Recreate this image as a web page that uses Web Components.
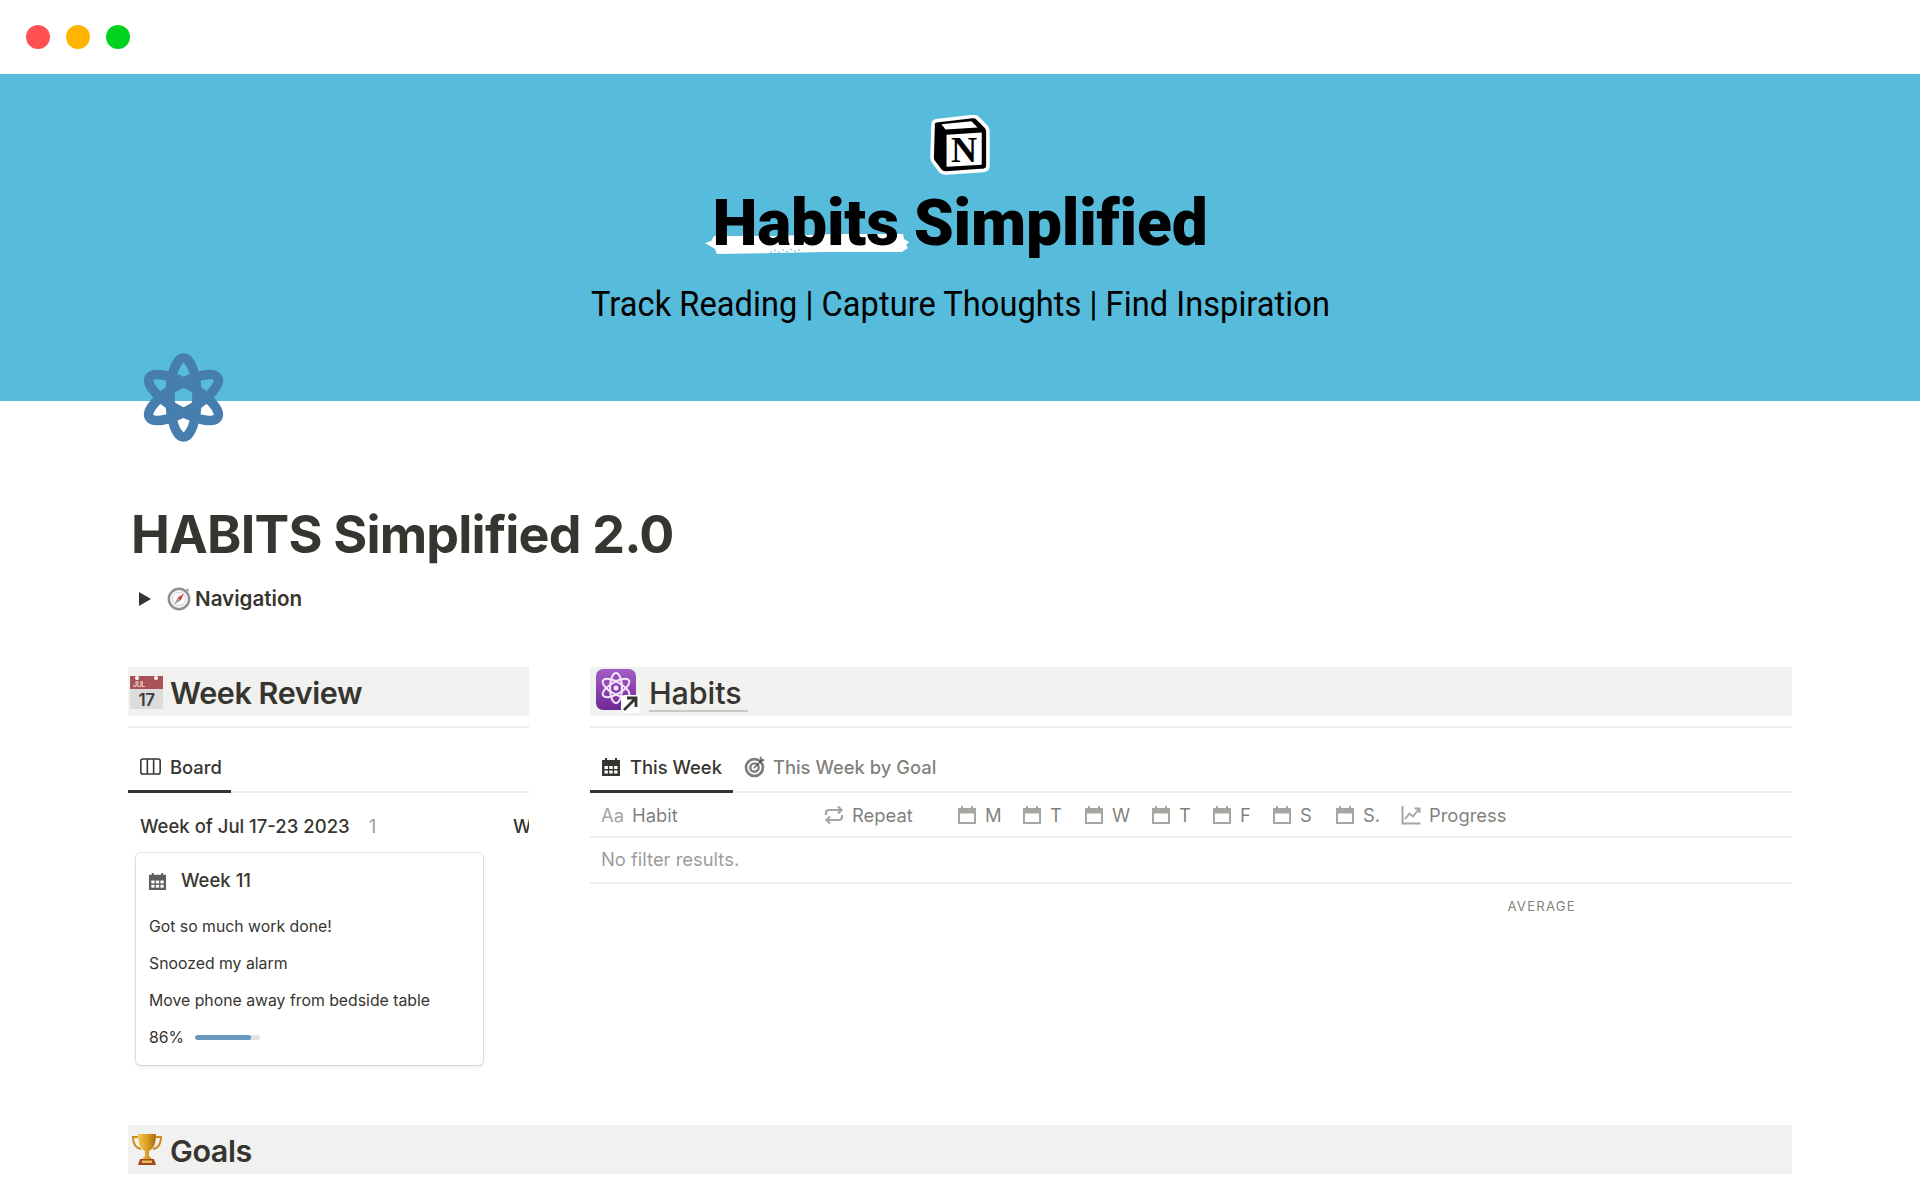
<!DOCTYPE html>
<html lang="en"><head><meta charset="utf-8"><title>Habits Simplified</title>
<style>
html,body{margin:0;padding:0;background:#fff;height:1200px;overflow:hidden}
body{font-family:Inter,"Liberation Sans",sans-serif;color:#37352f}
</style></head><body>
<x-page></x-page>
<script>
const ICONS={
cal:`<svg viewBox="0 0 20 20" width="100%" height="100%"><path fill="currentColor" d="M4 1h2v2h8V1h2v2h3v16H1V3h3z"/><g fill="#fff"><rect x="3.5" y="9" width="3.4" height="3"/><rect x="8.3" y="9" width="3.4" height="3"/><rect x="13.1" y="9" width="3.4" height="3"/><rect x="3.5" y="13.5" width="3.4" height="3"/><rect x="8.3" y="13.5" width="3.4" height="3"/><rect x="13.1" y="13.5" width="3.4" height="3"/></g></svg>`,
calo:`<svg viewBox="0 0 20 20" width="100%" height="100%"><path fill="currentColor" d="M4 1h2v2h8V1h2v2h3v16H1V3h3zM3 8.500V17h14V8.500z"/></svg>`,
board:`<svg viewBox="0 0 20 16" width="100%" height="100%" fill="none" stroke="currentColor" stroke-width="1.5"><rect x=".8" y=".8" width="18.4" height="14.4" rx="2"/><path d="M7 1v14M13 1v14"/></svg>`,
target:`<svg viewBox="0 0 20 20" width="100%" height="100%" fill="none" stroke="currentColor"><circle cx="9.500" cy="10.500" r="7.700" stroke-width="2.400"/><circle cx="9.500" cy="10.500" r="3.800" stroke-width="2.200"/><circle cx="9.500" cy="10.500" r="1" fill="currentColor" stroke="none"/><path d="M10 10l7-7" stroke-width="1.600"/><path d="M15 .5l.5 3 3 .5" stroke-width="1.600"/></svg>`,
repeat:`<svg viewBox="0 0 20 20" width="100%" height="100%" fill="none" stroke="currentColor" stroke-width="2.200"><path d="M2 10V8a3 3 0 0 1 3-3h12M14 1.500 17.500 5 14 8.500"/><path d="M18 10v2a3 3 0 0 1-3 3H3M6 11.500 2.500 15 6 18.500"/></svg>`,
chart:`<svg viewBox="0 0 20 20" width="100%" height="100%" fill="none" stroke="currentColor" stroke-width="1.900"><path d="M1.500 1v17.500H19.500"/><path d="M4 14l4.500-5.500 3.500 3L18 4"/><path d="M13.500 3.500H18.500V8"/></svg>`
};
function def(name,html,init){
 customElements.define(name,class extends HTMLElement{
  constructor(){super();this.attachShadow({mode:'open'}).innerHTML=html}
  connectedCallback(){init&&init(this)}
 });
}
def('x-icon',`<style>:host{display:inline-block;flex:none;line-height:0}</style><span id="i" style="display:block;width:100%;height:100%"></span>`,el=>{el.shadowRoot.getElementById('i').innerHTML=ICONS[el.getAttribute('name')]||''});

def('x-window-bar',`<style>
:host{display:flex;height:74px;align-items:center;gap:16px;padding-left:26px;background:#fff;box-sizing:border-box}
i{width:24px;height:24px;border-radius:50%;display:block}
</style><i style="background:#ff5152"></i><i style="background:#ffb500"></i><i style="background:#00d21f"></i>`);

def('x-brand-logo',`<style>:host{display:block;width:60px;height:60px}svg{display:block}</style>
<svg viewBox="1 1 58 58" width="60" height="60">
<path d="M4 10Q4 7 7 6.500L42 2.500Q45 2 47 4L55 12Q57 14 57 17V50Q57 54 53 54.500L17 57Q13 57.500 11 55L5 47Q3 45 3 42Z" fill="#000" stroke="#fff" stroke-width="3.500" stroke-linejoin="round"/>
<path d="M12 10 41 7 47 13 16 15Z" fill="#fff"/>
<path d="M17 20 51 18V49L17 51Z" fill="#fff"/>
<text x="34" y="46" text-anchor="middle" font-family="'Liberation Serif',serif" font-weight="700" font-size="35" fill="#000">N</text>
</svg>`);

def('x-cover',`<style>
:host{display:flex;flex-direction:column;align-items:center;height:327px;background:#57bbdb;box-sizing:border-box;padding-top:41px;color:#000}
h1{margin:14px 0 0;font:900 64px/70px Roboto,sans-serif;letter-spacing:-.2px;display:flex;gap:15px;white-space:nowrap}
.w{position:relative;z-index:0}
.w svg{position:absolute;left:-8px;bottom:5px;width:204px;height:21px;z-index:-1}
p{margin:23px 0 0;font:400 35.500px/44px Roboto,sans-serif;white-space:nowrap;letter-spacing:.05px;transform:scaleX(.918)}
</style>
<x-brand-logo></x-brand-logo>
<h1><span class="w"><svg viewBox="0 0 204 21" preserveAspectRatio="none"><path fill="#fff" d="M0 10 6 8 9 3 70 3 130 1 198 1 199 6 204 9 201 12 203 15 197 19 120 19 70 20 12 21 10 16 5 13Z"/><g fill="#8fd0e6"><circle cx="66" cy="19" r="1"/><circle cx="70" cy="17.500" r="1"/><circle cx="74" cy="19" r="1"/><circle cx="78" cy="17" r="1"/><circle cx="82" cy="18.500" r="1"/><circle cx="86" cy="16.500" r="1"/><circle cx="90" cy="18" r="1"/><circle cx="94" cy="17" r="1"/></g></svg>Habits</span><span>Simplified</span></h1>
<p>Track Reading | Capture Thoughts | Find Inspiration</p>`);

def('x-atom',`<style>:host{position:absolute;display:block;width:81px;height:89px}</style>
<svg viewBox="0 0 81 89" width="81" height="89" fill="none" stroke="#467fad" stroke-width="9.500">
<ellipse cx="40.500" cy="44.500" rx="13.500" ry="39.500"/>
<ellipse cx="40.500" cy="44.500" rx="13.500" ry="39.500" transform="rotate(60 40.500 44.500)"/>
<ellipse cx="40.500" cy="44.500" rx="13.500" ry="39.500" transform="rotate(-60 40.500 44.500)"/>
</svg>`);

def('x-toggle',`<style>
:host{display:flex;align-items:center;height:32px;font:600 20.600px/32px Inter,sans-serif;color:#37352f}
.t{width:0;height:0;border-left:12px solid #37352f;border-top:7px solid transparent;border-bottom:7px solid transparent;margin-left:11px;margin-right:16px}
svg{margin-right:4px;flex:none}
</style><span class="t"></span>
<svg viewBox="0 0 24 24" width="24" height="24"><circle cx="12" cy="12" r="10.200" fill="#f4f4f6" stroke="#8f8f96" stroke-width="2.400"/><circle cx="12" cy="12" r="6.500" fill="#fff" stroke="#d5d5da"/><path d="M17 6.500 13.500 13.500 10.500 11Z" fill="#e0322c"/><path d="M7 17.500 13.500 13.500 10.500 11Z" fill="#9a9aa0"/><circle cx="20.500" cy="3" r="1.500" fill="#aaa"/></svg>
<slot></slot>`);

def('x-heading',`<style>
:host{display:flex;align-items:center;height:49px;background:#f1f1ef;font:600 30.500px/49px Inter,sans-serif;color:#37352f;letter-spacing:-.42px;white-space:nowrap}
.ic{display:flex;width:42px;justify-content:flex-start;flex:none}
.tx{padding-top:2px;display:flex;align-items:center}
</style><span class="ic"><slot name="icon"></slot></span><span class="tx"><slot></slot></span>`);

def('x-cal-emoji',`<style>:host{display:block;margin-left:2px;line-height:0}</style>
<svg viewBox="0 0 33 34" width="33" height="34"><rect y="1" width="33" height="33" fill="#dcdcdc"/><rect y="1" width="33" height="13" fill="#a85358"/>
<circle cx="7" cy="3" r="2" fill="#fff"/><circle cx="26" cy="3" r="2" fill="#fff"/>
<text x="3" y="12" font-family="Inter,sans-serif" font-size="7" fill="#f0d6d6">JUL</text>
<text x="16.500" y="31" text-anchor="middle" font-family="Inter,sans-serif" font-size="17" fill="#3c3c3c">17</text></svg>`);

def('x-trophy',`<style>:host{display:block;margin-left:3px;line-height:0}</style>
<svg viewBox="0 0 32 33" width="32" height="33"><defs><linearGradient id="g" x1="0" x2="1"><stop offset="0" stop-color="#f6c64c"/><stop offset=".55" stop-color="#d99a20"/><stop offset="1" stop-color="#a86a12"/></linearGradient></defs>
<path d="M7 4H2c0 7 3 11 8 12M25 4h5c0 7-3 11-8 12" fill="none" stroke="#c98d1e" stroke-width="2"/>
<path d="M7 1h18c0 9-2 15-7 17v5l3 3H11l3-3v-5C9 16 7 10 7 1Z" fill="url(#g)"/>
<path d="M9 26h14l2 6H7Z" fill="#a5481f"/><rect x="11" y="27.500" width="10" height="2.500" fill="#e6b860"/></svg>`);

def('x-atom-tile',`<style>:host{display:block;margin-left:4px;margin-top:-3px;line-height:0}</style>
<svg viewBox="0 0 46 46" width="46" height="46">
<defs><linearGradient id="p" x2="0" y2="1"><stop offset="0" stop-color="#a45cc8"/><stop offset="1" stop-color="#6f2a97"/></linearGradient></defs>
<rect x="2" y="2" width="40" height="41" rx="7" fill="url(#p)"/>
<g fill="none" stroke="#f4e6fa" stroke-width="2"><ellipse cx="22" cy="21" rx="6" ry="15"/><ellipse cx="22" cy="21" rx="6" ry="15" transform="rotate(60 22 21)"/><ellipse cx="22" cy="21" rx="6" ry="15" transform="rotate(-60 22 21)"/></g><circle cx="22" cy="21" r="2.500" fill="#f4e6fa"/>
<rect x="27" y="28" width="19" height="18" rx="4" fill="#fff"/>
<path d="M30 43 42 31M33 31h9v9" fill="none" stroke="#37352f" stroke-width="2.800"/></svg>`);

def('x-tabs',`<style>
:host{display:flex;height:65px;align-items:flex-end;box-sizing:border-box;border-bottom:2px solid #ececeb;font:500 18.400px/24px Inter,sans-serif;white-space:nowrap}
</style><slot></slot>`);

def('x-tab',`<style>
:host{display:flex;align-items:center;height:53px;margin-bottom:-2px;box-sizing:border-box;gap:9px;padding-top:3px;border-bottom:3px solid transparent;color:rgba(55,53,47,.65)}
:host([active]){border-bottom-color:#37352f;color:#37352f}
</style><slot></slot>`);

def('x-card',`<style>
:host{display:block;width:347px;height:212px;box-sizing:border-box;border-radius:5px;background:#fff;box-shadow:0 0 0 1px rgba(15,15,15,.1),0 2px 4px rgba(15,15,15,.1);padding:0 13px;margin-left:8px;font:400 15.800px/20px Inter,sans-serif}
.t{display:flex;align-items:center;height:54.500px;font:500 18.500px/24px Inter,sans-serif;gap:14px}
.l{height:37.300px;line-height:37px;white-space:nowrap}
.p{display:flex;align-items:center;height:37px;gap:11px}
.b{width:65px;height:5px;border-radius:3px;background:#e3e2e0;overflow:hidden;margin-top:-1px}
.b i{display:block;height:100%;width:86%;background:#6698c0;border-radius:3px}
x-icon{width:19px;height:19px;color:#5f5e5b;margin:2px 0 0 -1px}
</style>
<div class="t"><x-icon name="cal"></x-icon><span>Week 11</span></div>
<div class="l">Got so much work done!</div><div class="l">Snoozed my alarm</div><div class="l">Move phone away from bedside table</div>
<div class="p"><span>86%</span><span class="b"><i></i></span></div>`);

def('x-board',`<style>
:host{display:flex;overflow:hidden;width:401px;white-space:nowrap;padding-bottom:8px}
.lane{flex:none;width:373px}
.h{height:60px;display:flex;align-items:center;padding:5px 0 0 12px;font:500 18.500px/24px Inter,sans-serif;box-sizing:border-box}
.h b{font-weight:400;color:rgba(55,53,47,.5);margin-left:19px}
</style>
<div class="lane"><div class="h">Week of Jul 17-23 2023<b>1</b></div><x-card></x-card></div>
<div class="lane"><div class="h">W</div></div>`);

def('x-table',`<style>
:host{display:block;font:400 18.400px/24px Inter,sans-serif;color:rgba(55,53,47,.65);white-space:nowrap}
.r{display:grid;grid-template-columns:223px 133px 65px 62px 67px 61px 60px 63px 66px 1fr;height:45px;align-items:center;border-bottom:2px solid #efefee;box-sizing:border-box;padding-top:1px}
.c{display:flex;align-items:center;gap:8px;padding-left:11px}
x-icon{width:20px;height:20px;color:#a5a5a1}
.aa{color:#a5a5a1;width:23px}
.e{height:46px;display:flex;align-items:center;padding:0 0 2px 11px;border-bottom:2px solid #efefee;box-sizing:border-box;color:rgba(55,53,47,.5)}
.f{display:flex;justify-content:flex-end;padding:13px 216px 0 0;font-size:13.200px;line-height:18px;letter-spacing:1.200px;color:rgba(55,53,47,.65)}
</style>
<div class="r"><div class="c"><span class="aa">Aa</span><span>Habit</span></div>
<div class="c"><x-icon name="repeat"></x-icon><span>Repeat</span></div>
<div class="c"><x-icon name="calo"></x-icon><span>M</span></div>
<div class="c"><x-icon name="calo"></x-icon><span>T</span></div>
<div class="c"><x-icon name="calo"></x-icon><span>W</span></div>
<div class="c"><x-icon name="calo"></x-icon><span>T</span></div>
<div class="c"><x-icon name="calo"></x-icon><span>F</span></div>
<div class="c"><x-icon name="calo"></x-icon><span>S</span></div>
<div class="c"><x-icon name="calo"></x-icon><span>S.</span></div>
<div class="c"><x-icon name="chart"></x-icon><span>Progress</span></div></div>
<div class="e">No filter results.</div>
<div class="f">AVERAGE</div>`);

def('x-section',`<style>
:host{display:block;min-width:0}
.d{height:2px;background:#ececeb;margin-top:10px}
</style><slot name="head"></slot><div class="d"></div><slot></slot>`);

def('x-page',`<style>
:host{display:block;width:1920px;height:1200px;overflow:hidden;background:#fff}
.wrap{position:relative}
x-atom{left:143px;top:-48px}
main{padding:104px 128px 0}
h1{margin:0 0 0 3px;font:700 52px/60px Inter,sans-serif;color:#37352f;letter-spacing:-.8px;white-space:nowrap}
x-toggle{margin-top:18px}
.cols{display:grid;grid-template-columns:401px 1202px;column-gap:61px;margin-top:52px}
.goals{margin-top:52px}
.u{border-bottom:2px solid #c9c8c5;line-height:35px;font-weight:500;padding-right:6px;margin-left:17px;margin-top:2px;display:inline-block;letter-spacing:-.1px}
x-tab x-icon{width:20px;height:20px}
#t1{padding-left:12px;padding-right:11px;width:103px}
#t2{padding-left:11px;padding-right:11px}
#t3{padding-left:11px;padding-right:11px}
#t3 x-icon{width:22px;height:22px;margin-right:-2px}
</style>
<x-window-bar></x-window-bar>
<x-cover></x-cover>
<div class="wrap"><x-atom></x-atom>
<main>
<h1>HABITS Simplified 2.0</h1>
<x-toggle>Navigation</x-toggle>
<div class="cols">
<x-section><x-heading slot="head"><x-cal-emoji slot="icon"></x-cal-emoji>Week Review</x-heading>
 <x-tabs><x-tab active id="t1"><x-icon name="board" style="width:21px;height:17px"></x-icon>Board</x-tab></x-tabs>
 <x-board></x-board>
</x-section>
<x-section><x-heading slot="head"><x-atom-tile slot="icon"></x-atom-tile><span class="u">Habits</span></x-heading>
 <x-tabs><x-tab active id="t2"><x-icon name="cal"></x-icon>This Week</x-tab><x-tab id="t3"><x-icon name="target"></x-icon>This Week by Goal</x-tab></x-tabs>
 <x-table></x-table>
</x-section>
</div>
<x-heading class="goals"><x-trophy slot="icon"></x-trophy>Goals</x-heading>
</main></div>`);
</script>
</body></html>
